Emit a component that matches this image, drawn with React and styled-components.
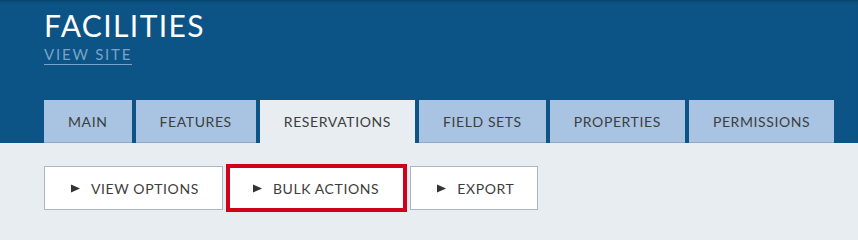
import styled, { createGlobalStyle } from 'styled-components';

const GlobalStyle = createGlobalStyle`
    html, body {
        margin: 0;
        padding: 0;
        background: #e8edf1;
        font-family: Lato, "Open Sans", sans-serif;
    }
`

const Header = styled.header`
    background: #0b5485;
    box-shadow: inset 0 3px 3px -2px rgba(0, 0, 0, 0.25);
    padding: 0 0 0 44px;
    height: 143px;
    display: flex;
    flex-direction: column;
`

const Title = styled.h1`
    margin: 8px 0 0;
    font-size: 30px;
    line-height: 34px;
    font-weight: 400;
    letter-spacing: 1.4px;
    color: #fff;
`

const SiteLink = styled.a`
    align-self: flex-start;
    margin-top: 3px;
    font-size: 15px;
    line-height: 18px;
    font-weight: 400;
    letter-spacing: 1.8px;
    color: #7aa2ca;
    text-decoration: none;
    border-bottom: 1px solid #7aa2ca;
    padding-bottom: 1px;
`

const Tabs = styled.nav`
    display: flex;
    gap: 4px;
    margin-top: auto;
`

const Tab = styled.div`
    height: 43px;
    box-sizing: border-box;
    padding: 0 24px;
    display: flex;
    align-items: center;
    font-size: 14px;
    letter-spacing: 0.6px;
    color: #3d3d3d;
    background: ${p => (p.$active ? '#e8edf1' : '#a8c4e2')};
    border-bottom: 1px solid ${p => (p.$active ? '#e8edf1' : '#8fa9c6')};
`

const Content = styled.main`
    padding: 21px 0 0 44px;
`

const Actions = styled.div`
    display: flex;
    align-items: center;
    gap: 3px;
`

const ActionButton = styled.button`
    display: flex;
    align-items: center;
    gap: 11px;
    box-sizing: border-box;
    height: ${p => (p.$highlight ? '48px' : '44px')};
    padding: 0 ${p => (p.$highlight ? '24px' : '23px')} 0 ${p => (p.$highlight ? '23px' : '26px')};
    background: #fff;
    border: ${p => (p.$highlight ? '4px solid #d0021b' : '1px solid #a9b7c6')};
    font-family: inherit;
    font-size: 14px;
    letter-spacing: 0.6px;
    color: #3d3d3d;
    cursor: pointer;
`

const Arrow = () => (
    <svg width="9" height="9" viewBox="0 0 9 9">
        <path d="M0 0.5 L9 4.5 L0 8.5 Z" fill="#333" />
    </svg>
)

const tabs = ['MAIN', 'FEATURES', 'RESERVATIONS', 'FIELD SETS', 'PROPERTIES', 'PERMISSIONS']

const App = () => {
    return (
        <>
            <GlobalStyle />
            <Header>
                <Title>FACILITIES</Title>
                <SiteLink href="#">VIEW SITE</SiteLink>
                <Tabs>
                    {tabs.map(t => (
                        <Tab key={t} $active={t === 'RESERVATIONS'}>{t}</Tab>
                    ))}
                </Tabs>
            </Header>
            <Content>
                <Actions>
                    <ActionButton><Arrow />VIEW OPTIONS</ActionButton>
                    <ActionButton $highlight><Arrow />BULK ACTIONS</ActionButton>
                    <ActionButton><Arrow />EXPORT</ActionButton>
                </Actions>
            </Content>
        </>
    )
}

export default App;
